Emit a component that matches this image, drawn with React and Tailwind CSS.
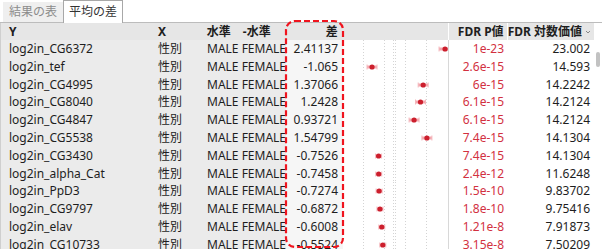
import React from 'react';

const rows = [
  ['log2in_CG6372', '2.41137', '1e-23', '23.002', 2.41137, 6],
  ['log2in_tef', '-1.065', '2.6e-15', '14.593', -1.065, 5],
  ['log2in_CG4995', '1.37066', '6e-15', '14.2242', 1.37066, 5],
  ['log2in_CG8040', '1.2428', '6.1e-15', '14.2124', 1.2428, 5],
  ['log2in_CG4847', '0.93721', '6.1e-15', '14.2124', 0.93721, 5],
  ['log2in_CG5538', '1.54799', '7.4e-15', '14.1304', 1.54799, 5],
  ['log2in_CG3430', '-0.7526', '7.4e-15', '14.1304', -0.7526, 3],
  ['log2in_alpha_Cat', '-0.7458', '2.4e-12', '11.6248', -0.7458, 3],
  ['log2in_PpD3', '-0.7274', '1.5e-10', '9.83702', -0.7274, 3],
  ['log2in_CG9797', '-0.6872', '1.8e-10', '9.75416', -0.6872, 3],
  ['log2in_elav', '-0.6008', '1.21e-8', '7.91873', -0.6008, 3],
  ['log2in_CG10733', '-0.5524', '3.15e-8', '7.50209', -0.5524, 3],
];

const font = { fontFamily: '"Noto Sans", "Noto Sans CJK JP", sans-serif' };

function PlotCell({ v, err }) {
  const cx = 51.4 + 21 * v;
  return (
    <svg width="105" height="18" className="block">
      {[20, 41, 50, 52, 62, 83].map((x) => (
        <line key={x} x1={x + 0.5} x2={x + 0.5} y1="0" y2="18" stroke="#d4d4d4" strokeDasharray="1 2" />
      ))}
      <rect x={cx - err} y="7.5" width={err * 2} height="3" fill="#f4a7ae" />
      <line x1={cx - err} x2={cx - err} y1="6.5" y2="11.5" stroke="#f4b8bd" />
      <line x1={cx + err} x2={cx + err} y1="6.5" y2="11.5" stroke="#f4b8bd" />
      <circle cx={cx} cy="9" r="2.6" fill="#cc1f2d" />
    </svg>
  );
}

export default function App() {
  return (
    <div className="relative w-[602px] h-[249px] overflow-hidden bg-white text-[12px] text-[#1e1e1e]" style={font}>
      {/* tabs */}
      <div className="flex items-end h-[23px] border-b border-[#bcbcbc] pl-[3px]">
        <div className="h-[20px] px-[6px] flex items-center bg-[#efefef] text-[#8c8c8c]">結果の表</div>
        <div className="h-[23px] -mb-px px-[5px] flex items-center bg-white border border-b-0 border-[#a8a8a8] text-[#333]">平均の差</div>
      </div>

      {/* header */}
      <div className="flex h-[17px] bg-[#e6e6e6] font-bold leading-[17px] border-l border-[#cfcfcf] w-[594px]">
        <div className="w-[152px] pl-[8px]">Y</div>
        <div className="w-[50px] pl-[5px]">X</div>
        <div className="w-[37px] pl-[4px]">水準</div>
        <div className="w-[46px] pl-[3px]">-水準</div>
        <div className="w-[57px] pr-[5px] text-right">差</div>
        <div className="w-[105px]"></div>
        <div className="w-[59px] pr-[3px] text-right border-l border-white whitespace-nowrap">FDR P値</div>
        <div className="flex-1 flex items-center justify-end pr-[2px] border-l border-white whitespace-nowrap">
          FDR 対数価値
          <svg width="8" height="8" viewBox="0 0 8 8" className="ml-[2px]">
            <path d="M2 3 L4 5 L6 3" fill="none" stroke="#888" strokeWidth="1" />
          </svg>
        </div>
      </div>

      {/* body */}
      <div className="flex">
        <div className="w-[594px] border-l border-[#cfcfcf]">
          {rows.map(([name, diff, p, lg, v, err]) => (
            <div key={name} className="flex h-[17.8px] leading-[17.8px] overflow-hidden">
              <div className="w-[152px] pl-[8px] bg-[#ebebeb] whitespace-nowrap">{name}</div>
              <div className="w-[50px] pl-[5px] bg-[#ebebeb]">性別</div>
              <div className="w-[83px] pl-[4px] bg-[#ebebeb] whitespace-nowrap overflow-hidden">MALE FEMALE</div>
              <div className="w-[57px] pr-[5px] text-right bg-[#f6f6f6]">{diff}</div>
              <div className="w-[105px] bg-white">
                <PlotCell v={v} err={err} />
              </div>
              <div className="w-[59px] pr-[3px] text-right text-[#d2313f] border-l border-[#d8d8d8]">{p}</div>
              <div className="flex-1 pr-[4px] text-right">{lg}</div>
            </div>
          ))}
        </div>
        {/* scrollbar */}
        <div className="w-[8px] relative">
          <div className="absolute left-[2px] top-[12px] w-[4px] h-[15px] rounded-full bg-[#c2c2c2]"></div>
        </div>
      </div>

      {/* highlight box */}
      <svg className="absolute left-[284px] top-[19px]" width="62" height="230">
        <rect x="2" y="2" width="57" height="226" rx="9" fill="none" stroke="#f0141e" strokeWidth="2.2" strokeDasharray="6 3" />
      </svg>
    </div>
  );
}
